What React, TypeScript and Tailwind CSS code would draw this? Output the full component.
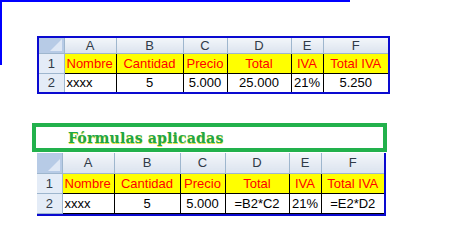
import React from "react";

const cols1 = [26, 52, 67, 44, 64, 32, 66];
const cols2 = [25, 52, 66, 45, 64, 32, 64];
const letters = ["A", "B", "C", "D", "E", "F"];
const heads = ["Nombre", "Cantidad", "Precio", "Total", "IVA", "Total IVA"];

function Corner({ h }: { h: number }) {
  return (
    <td
      className="p-0 border-r border-b border-[#9eb6ce] bg-[#b7cbe6] relative"
      style={{ height: h }}
    >
      <svg className="absolute right-[2px] bottom-[2px]" width="12" height="12" viewBox="0 0 12 12">
        <polygon points="12,0 12,12 0,12" fill="#dfe8f5" />
      </svg>
    </td>
  );
}

function Sheet({
  cols,
  row2,
  headerH,
  extra,
  className,
}: {
  cols: number[];
  row2: string[];
  headerH: number;
  extra?: boolean;
  className: string;
}) {
  const font = { fontFamily: '"Liberation Sans", Arial, sans-serif' };
  return (
    <table className={"border-collapse table-fixed text-[13px] leading-none " + className} style={font}>
      <colgroup>
        {cols.map((w, i) => (
          <col key={i} style={{ width: w }} />
        ))}
      </colgroup>
      <tbody>
        <tr>
          <Corner h={headerH} />
          {letters.map((l) => (
            <td
              key={l}
              className="p-0 text-center text-[#303a47] border-r border-b border-[#9eb6ce] bg-gradient-to-b from-[#f3f6fa] to-[#dbe3ee]"
            >
              {l}
            </td>
          ))}
        </tr>
        <tr className="h-[20px]">
          <td className="p-0 text-center text-[#303a47] bg-[#e4ecf7] border-r border-b border-[#9eb6ce]">1</td>
          {heads.map((t, i) => (
            <td
              key={t}
              className={
                "p-0 bg-[#ffff00] text-[#ff0000] border border-black whitespace-nowrap overflow-hidden " +
                (i === 0 ? "text-left pl-[2px]" : "text-center")
              }
            >
              {t}
            </td>
          ))}
        </tr>
        <tr className="h-[20px]">
          <td className="p-0 text-center text-[#303a47] bg-[#e4ecf7] border-r border-b border-[#9eb6ce]">2</td>
          {row2.map((t, i) => (
            <td
              key={i}
              className={
                "p-0 text-black border border-black bg-white whitespace-nowrap " +
                (i === 0 ? "text-left pl-[2px]" : "text-center")
              }
            >
              {t}
            </td>
          ))}
        </tr>
        {extra && (
          <tr className="h-[2px]">
            <td className="p-0 bg-[#e4ecf7] border-r border-[#9eb6ce]"></td>
            {row2.map((_, i) => (
              <td key={i} className="p-0 border-r border-black bg-white"></td>
            ))}
          </tr>
        )}
      </tbody>
    </table>
  );
}

export default function App() {
  return (
    <div className="relative w-[469px] h-[250px] bg-white overflow-hidden">
      <div className="absolute left-0 top-0 w-[350px] h-[65px] border-t-2 border-l-2 border-[#0000ff]" />
      <div className="relative pt-[36px] pl-[37px] flex flex-col items-start">
        <Sheet
          cols={cols1}
          headerH={16}
          row2={["xxxx", "5", "5.000", "25.000", "21%", "5.250"]}
          className="border-2 border-[#0a0ad0]"
        />
        <div className="mt-[29px] -ml-[5px] w-[355px] h-[29px] border-4 border-[#22b14c] flex items-center pl-[32px]">
          <span
            className="text-[14px] font-bold text-[#1fa649] leading-none tracking-[0.2px]"
            style={{ fontFamily: '"DejaVu Serif", "Liberation Serif", serif', textShadow: "0.5px 0.5px 0 #e6e64a" }}
          >
            Fórmulas aplicadas
          </span>
        </div>
        <Sheet
          cols={cols2}
          headerH={20}
          extra
          row2={["xxxx", "5", "5.000", "=B2*C2", "21%", "=E2*D2"]}
          className="mt-[1px] border-r-2 border-b-2 border-[#0a0ad0]"
        />
      </div>
    </div>
  );
}
